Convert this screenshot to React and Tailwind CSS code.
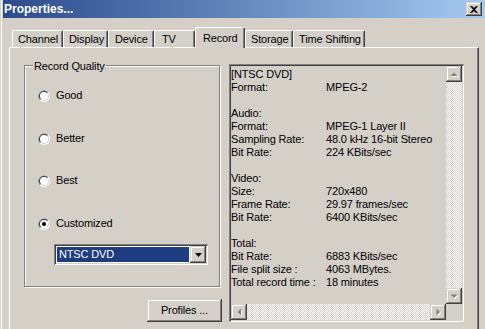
import React from "react";

const raised =
  "shadow-[inset_-1px_-1px_0_#404040,inset_1px_1px_0_#d4d0c8,inset_-2px_-2px_0_#808080,inset_2px_2px_0_#fff]";
const sunken =
  "shadow-[inset_1px_1px_0_#808080,inset_-1px_-1px_0_#fff,inset_2px_2px_0_#404040,inset_-2px_-2px_0_#d4d0c8]";

const tabs = [
  { label: "Channel", w: "w-[51px]", pl: "pl-[5px]" },
  { label: "Display", w: "w-[45px]", pl: "pl-[5px]" },
  { label: "Device", w: "w-[46px]", pl: "pl-[6px]" },
  { label: "TV", w: "w-[41px]", pl: "pl-[7px]" },
  { label: "Record", w: "w-[50px]", pl: "pl-[7px]", active: true },
  { label: "Storage", w: "w-[48px]", pl: "pl-[5px]" },
  { label: "Time Shifting", w: "w-[72px]", pl: "pl-[5px]" },
];

const info = [
  ["[NTSC DVD]", ""],
  ["Format:", "MPEG-2"],
  ["", ""],
  ["Audio:", ""],
  ["Format:", "MPEG-1 Layer II"],
  ["Sampling Rate:", "48.0 kHz 16-bit Stereo"],
  ["Bit Rate:", "224 KBits/sec"],
  ["", ""],
  ["Video:", ""],
  ["Size:", "720x480"],
  ["Frame Rate:", "29.97 frames/sec"],
  ["Bit Rate:", "6400 KBits/sec"],
  ["", ""],
  ["Total:", ""],
  ["Bit Rate:", "6883 KBits/sec"],
  ["File split size :", "4063 MBytes."],
  ["Total record time :", "18 minutes"],
];

function Radio({ checked }) {
  return (
    <svg width="12" height="12" viewBox="0 0 12 12" className="shrink-0">
      <circle cx="6" cy="6" r="6" fill="#fff" />
      <path d="M1.76 10.24A6 6 0 0 1 10.24 1.76Z" fill="#808080" />
      <circle cx="6" cy="6" r="5" fill="#d4d0c8" />
      <path d="M2.46 9.54A5 5 0 0 1 9.54 2.46Z" fill="#404040" />
      <circle cx="6" cy="6" r="4" fill="#fff" />
      {checked && <circle cx="6" cy="6" r="2" fill="#000" />}
    </svg>
  );
}

function Arrow({ dir }) {
  const pts = {
    up: "4.5,10 8,6.5 11.5,10",
    down: "4.5,6.5 11.5,6.5 8,10",
    left: "10,4.5 10,11.5 6.5,8",
    right: "6.5,4.5 6.5,11.5 10,8",
  }[dir];
  return (
    <svg width="16" height="16" viewBox="0 0 16 16">
      <polygon points={pts} fill="#fff" transform="translate(1 1)" />
      <polygon points={pts} fill="#808080" />
    </svg>
  );
}

function ScrollButton({ dir }) {
  return (
    <div className={`w-[16px] h-[16px] shrink-0 bg-[#d4d0c8] ${raised}`}>
      <Arrow dir={dir} />
    </div>
  );
}

const track =
  "bg-[image:repeating-conic-gradient(#fff_0_25%,#d4d0c8_0_50%)] bg-[length:2px_2px]";

export default function App() {
  return (
    <div className="w-[485px] h-[329px] overflow-hidden bg-[#d4d0c8] flex flex-col font-['Liberation_Sans',Arial,sans-serif] text-[11px] tracking-[-0.15px] text-black shadow-[inset_1px_0_0_#d4d0c8,inset_2px_0_0_#fff]">
      {/* title bar */}
      <div className="ml-[3px] h-[18px] shrink-0 flex items-center bg-linear-to-r from-[#2c4b8c] to-[#a6caf0] pr-[3px]">
        <span className="pl-[1px] text-[12px] font-bold text-white tracking-normal">
          Properties...
        </span>
        <div className={`ml-auto w-[16px] h-[14px] bg-[#d4d0c8] flex items-center justify-center ${raised}`}>
          <svg width="8" height="7" viewBox="0 0 8 7">
            <path d="M0 0h2l2 2 2-2h2L5 3.5 8 7H6L4 5 2 7H0l3-3.5Z" fill="#000" />
          </svg>
        </div>
      </div>

      {/* tabs */}
      <div className="mt-[9px] h-[20px] shrink-0 flex items-end pl-[12px]">
        {tabs.map((t) =>
          t.active ? (
            <div
              key={t.label}
              className={`${t.w} ${t.pl} h-[21px] -mb-px relative z-10 bg-[#d4d0c8] border-t border-l border-white border-r border-r-[#404040] shadow-[inset_-1px_0_0_#808080] rounded-t-[2px] flex items-center`}
            >
              {t.label}
            </div>
          ) : (
            <div
              key={t.label}
              className={`${t.w} ${t.pl} h-[17px] pt-px border-t border-l border-white border-r border-r-[#404040] shadow-[inset_-1px_0_0_#808080] rounded-t-[2px] flex items-center whitespace-nowrap`}
            >
              {t.label}
            </div>
          )
        )}
      </div>

      {/* tab panel */}
      <div className="ml-[9px] w-[470px] flex-1 border-t border-l border-white border-r border-r-[#404040] shadow-[inset_-1px_0_0_#808080] flex">
        {/* left column */}
        <div className="ml-[14px] mt-[17px] w-[198px] flex flex-col">
          <div className="relative w-[196px] h-[222px] border border-[#808080] shadow-[inset_1px_1px_0_#fff,1px_1px_0_#fff] flex flex-col pt-[23px]">
            <span className="absolute left-[8px] top-[-6px] px-[1px] leading-[13px] bg-[#d4d0c8]">
              Record Quality
            </span>
            {[
              ["Good", false, ""],
              ["Better", false, "mt-[30px]"],
              ["Best", false, "mt-[29px]"],
              ["Customized", true, "mt-[30px]"],
            ].map(([label, checked, mt]) => (
              <div key={label} className={`${mt} ml-[13px] h-[13px] flex items-center gap-[6px] leading-[13px]`}>
                <Radio checked={checked} />
                <span>{label}</span>
              </div>
            ))}
            <div className={`mt-[14px] ml-[29px] w-[154px] h-[21px] p-[2px] bg-white flex ${sunken}`}>
              <div className="flex-1 m-[1px] bg-[#1e3c80] text-white leading-[15px] pl-[2px]">
                NTSC DVD
              </div>
              <div className={`w-[16px] h-[17px] bg-[#d4d0c8] flex items-center justify-center ${raised}`}>
                <svg width="7" height="4" viewBox="0 0 7 4">
                  <polygon points="0,0 7,0 3.5,4" fill="#000" />
                </svg>
              </div>
            </div>
          </div>
          <div className={`self-end mt-[12px] w-[75px] h-[23px] flex items-center justify-center ${raised}`}>
            Profiles ...
          </div>
        </div>

        {/* info box */}
        <div className={`ml-[7px] mt-[16px] w-[235px] h-[258px] p-[2px] flex flex-col ${sunken}`}>
          <div className="h-[238px] flex">
            <div className="flex-1 pt-[2px] overflow-hidden">
              {info.map(([k, v], i) => (
                <div key={i} className="h-[13px] leading-[13px] flex whitespace-nowrap">
                  <span className="w-[95px] shrink-0">{k}</span>
                  <span>{v}</span>
                </div>
              ))}
            </div>
            <div className="w-[16px] flex flex-col">
              <ScrollButton dir="up" />
              <div className={`flex-1 ${track}`} />
              <ScrollButton dir="down" />
            </div>
          </div>
          <div className="h-[16px] flex">
            <ScrollButton dir="left" />
            <div className={`flex-1 ${track}`} />
            <ScrollButton dir="right" />
            <div className="w-[16px] bg-[#d4d0c8]" />
          </div>
        </div>
      </div>
    </div>
  );
}
